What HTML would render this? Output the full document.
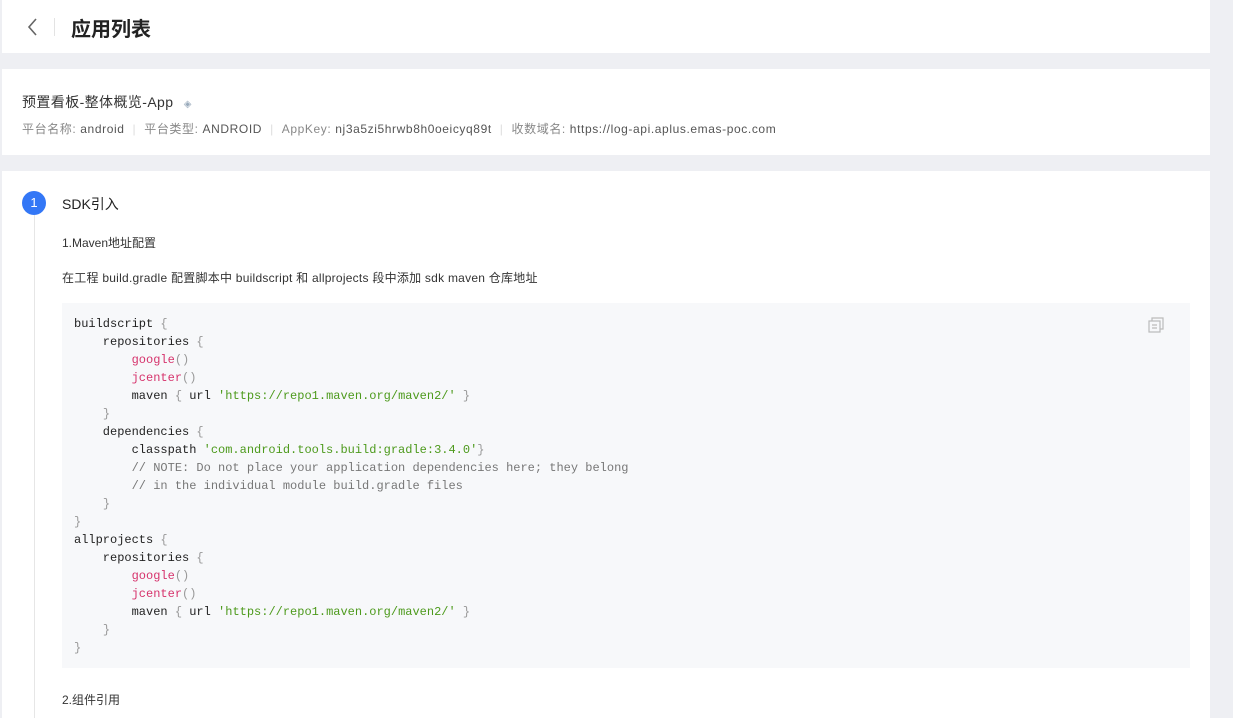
<!DOCTYPE html>
<html><head><meta charset="utf-8"><style>
*{margin:0;padding:0;box-sizing:border-box}
body{width:1233px;height:718px;overflow:hidden;background:#eeeff3;font-family:"Liberation Sans","Noto Sans CJK SC",sans-serif;color:#333;position:relative}
.p{position:absolute;left:2px;width:1208px;background:#fff}
.code{position:absolute;left:62px;top:303px;width:1128px;height:365px;background:#f7f8fa;font-family:"Liberation Mono",monospace;font-size:12px;line-height:18px;padding:12px 0 0 12px;white-space:pre;color:#222}
.r{color:#d6336c}.g{color:#4d9a1c}.c{color:#777}.b{color:#999}
.s{color:#ddd;margin:0 8px}
</style></head><body>
<div class="p" style="top:0;height:53px">
<svg style="position:absolute;left:24px;top:17px" width="14" height="20" viewBox="0 0 14 20"><path d="M10 2 L3 10 L10 18" fill="none" stroke="#666" stroke-width="1.6"/></svg>
<div style="position:absolute;left:52px;top:18px;width:1px;height:18px;background:#e3e3e3"></div>
<div style="position:absolute;left:69px;top:13px;font-size:20px;font-weight:bold;color:#222">应用列表</div>
</div>
<div class="p" style="top:69px;height:86px">
<div style="position:absolute;left:20px;top:23px;font-size:14px;color:#333;letter-spacing:0.4px">预置看板-整体概览-App <span style="color:#9ab;font-size:10px;margin-left:6px">◈</span></div>
<div style="position:absolute;left:20px;top:51px;font-size:12px;color:#888;letter-spacing:0.6px">平台名称: <span style="color:#555">android</span><span class="s">|</span>平台类型: <span style="color:#555">ANDROID</span><span class="s">|</span>AppKey: <span style="color:#555">nj3a5zi5hrwb8h0oeicyq89t</span><span class="s">|</span>收数域名: <span style="color:#555">https://log-api.aplus.emas-poc.com</span></div>
</div>
<div class="p" style="top:171px;height:547px">
<div style="position:absolute;left:20px;top:20px;width:24px;height:24px;border-radius:50%;background:#3377f6;color:#fff;font-size:13px;text-align:center;line-height:24px">1</div>
<div style="position:absolute;left:32px;top:44px;width:1px;height:503px;background:#e6e6e6"></div>
<div style="position:absolute;left:60px;top:23px;font-size:14px;color:#222">SDK引入</div>
<div style="position:absolute;left:60px;top:63px;font-size:12px;color:#333">1.Maven地址配置</div>
<div style="position:absolute;left:60px;top:98px;font-size:12px;color:#333;letter-spacing:0.25px">在工程 build.gradle 配置脚本中 buildscript 和 allprojects 段中添加 sdk maven 仓库地址</div>
<div style="position:absolute;left:60px;top:520px;font-size:12px;color:#333">2.组件引用</div>
</div>
<div class="code">buildscript <span class="b">{</span>
    repositories <span class="b">{</span>
        <span class="r">google</span><span class="b">()</span>
        <span class="r">jcenter</span><span class="b">()</span>
        maven <span class="b">{</span> url <span class="g">'https://repo1.maven.org/maven2/'</span> <span class="b">}</span>
    <span class="b">}</span>
    dependencies <span class="b">{</span>
        classpath <span class="g">'com.android.tools.build:gradle:3.4.0'</span><span class="b">}</span>
        <span class="c">// NOTE: Do not place your application dependencies here; they belong</span>
        <span class="c">// in the individual module build.gradle files</span>
    <span class="b">}</span>
<span class="b">}</span>
allprojects <span class="b">{</span>
    repositories <span class="b">{</span>
        <span class="r">google</span><span class="b">()</span>
        <span class="r">jcenter</span><span class="b">()</span>
        maven <span class="b">{</span> url <span class="g">'https://repo1.maven.org/maven2/'</span> <span class="b">}</span>
    <span class="b">}</span>
<span class="b">}</span></div>
<svg style="position:absolute;left:1147px;top:316px" width="18" height="18" viewBox="0 0 18 18" fill="none" stroke="#bbb" stroke-width="1.2"><rect x="2" y="5" width="11" height="11"/><path d="M5 5V2h11v11h-3"/><path d="M5 9h5M5 12h5"/></svg>
</body></html>
